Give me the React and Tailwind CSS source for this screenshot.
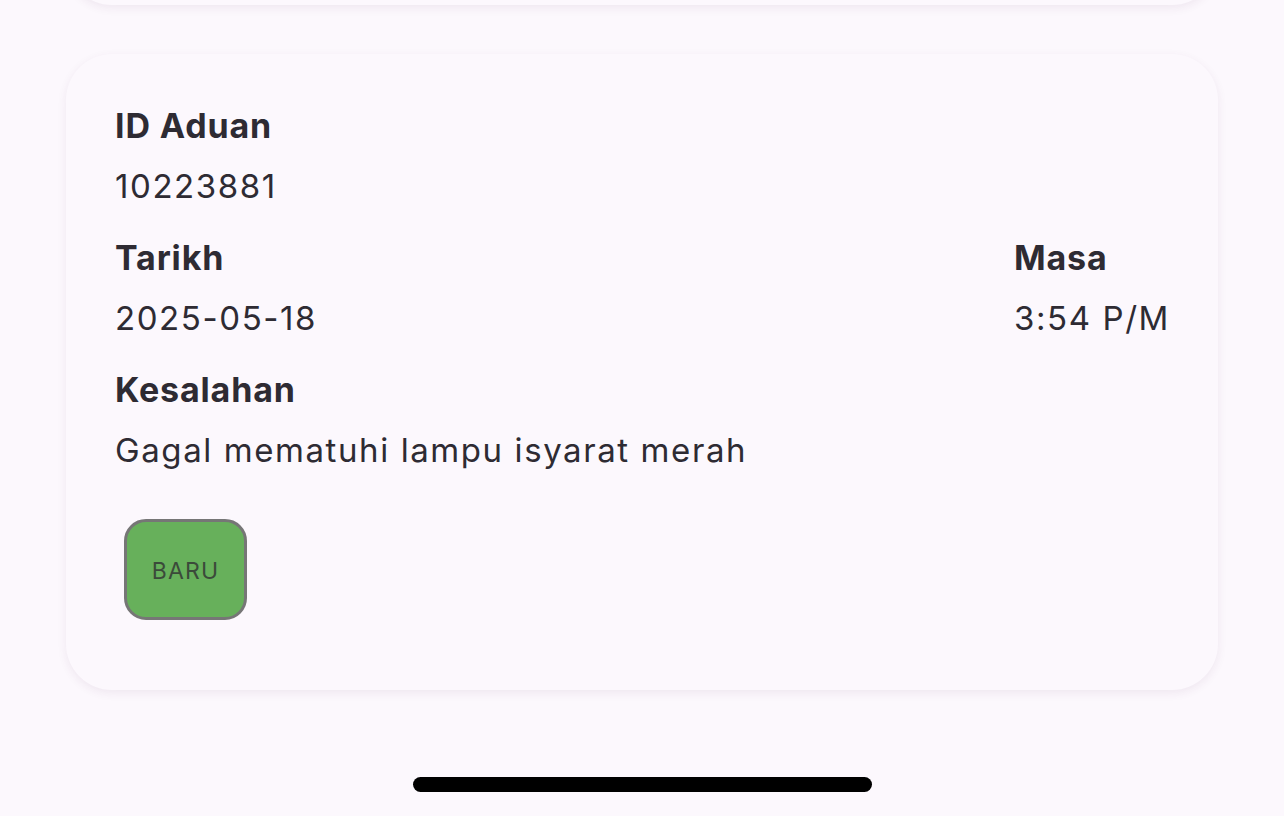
import React from 'react';

const Field = ({ label, value, className = "" }) => (
    <div className={`flex flex-col ${className}`}>
        <span className="text-[34px] leading-[40px] font-bold tracking-[0.025em] text-[#2e2b33]">{label}</span>
        <span className="mt-[20px] text-[33px] leading-[40px] tracking-[0.048em] text-[#2e2b33]">{value}</span>
    </div>
);

const ComplaintCard = ({ id, date, time, offence, status }) => {
    return (
        <div className="mx-[66px] rounded-[46px] bg-[#fcf8fd] shadow-[0_3px_10px_rgba(90,40,90,0.08)] pl-[49px] pr-[48px] pt-[52px] pb-[70px]">
            <Field label="ID Aduan" value={id} />
            <div className="mt-[32px] flex justify-between">
                <Field label="Tarikh" value={date} />
                <Field label="Masa" value={time} />
            </div>
            <Field label="Kesalahan" value={offence} className="mt-[32px]" />
            <div className="mt-[49px] ml-[9px] w-[123px] h-[101px] rounded-[22px] border-[3px] border-[#767676] bg-[#67b05b] flex items-center justify-center pt-[3px]">
                <span className="text-[23px] tracking-[0.05em] text-[#3b4a3a]">{status}</span>
            </div>
        </div>
    );
};

const App = () => {
    return (
        <div className="w-full h-[816px] overflow-hidden bg-[#fcf8fd] flex flex-col" style={{ fontFamily: 'Inter, "Noto Sans", sans-serif' }}>
            {/* previous card, scrolled mostly out of view */}
            <div className="mx-[66px] -mt-[95px] h-[100px] rounded-[46px] bg-[#fcf8fd] shadow-[0_3px_10px_rgba(90,40,90,0.08)] shrink-0"></div>

            <div className="mt-[49px]">
                <ComplaintCard
                    id="10223881"
                    date="2025-05-18"
                    time="3:54 P/M"
                    offence="Gagal mematuhi lampu isyarat merah"
                    status="BARU"
                />
            </div>

            <div className="mt-auto mb-[24px] flex justify-center">
                <div className="w-[459px] h-[15px] rounded-full bg-black"></div>
            </div>
        </div>
    );
};

export default App;
